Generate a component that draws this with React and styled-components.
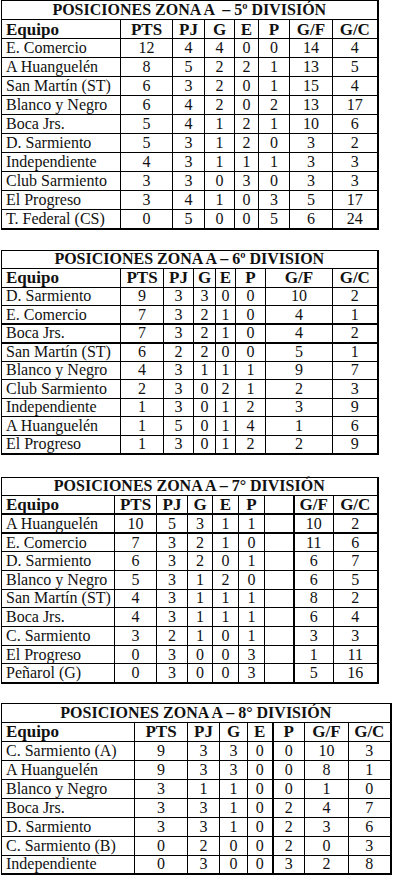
import React from 'react';
import styled, { createGlobalStyle } from 'styled-components';

const GlobalStyle = createGlobalStyle`
    html, body {
        margin: 0;
        padding: 0;
        background: #ffffff;
    }

    body {
        font-family: 'Liberation Serif', 'Times New Roman', serif;
        color: #111111;
    }
`;

// thickCol: index of the column whose right edge is drawn heavier
// thickRows: body rows drawn with a heavier top and bottom line
// blank: index where the sheet has an empty spacer column
const tables = [
    {
        title: 'POSICIONES ZONA A  – 5º DIVISIÓN',
        width: 376,
        rowHeight: 19,
        gap: 0,
        cols: [119, 52, 32, 30, 24, 31, 43, 45],
        thickCol: -1,
        thickRows: [],
        blank: null,
        rows: [
            ['E. Comercio', 12, 4, 4, 0, 0, 14, 4],
            ['A Huanguelén', 8, 5, 2, 2, 1, 13, 5],
            ['San Martín (ST)', 6, 3, 2, 0, 1, 15, 4],
            ['Blanco y Negro', 6, 4, 2, 0, 2, 13, 17],
            ['Boca Jrs.', 5, 4, 1, 2, 1, 10, 6],
            ['D. Sarmiento', 5, 3, 1, 2, 0, 3, 2],
            ['Independiente', 4, 3, 1, 1, 1, 3, 3],
            ['Club Sarmiento', 3, 3, 0, 3, 0, 3, 3],
            ['El Progreso', 3, 4, 1, 0, 3, 5, 17],
            ['T. Federal (CS)', 0, 5, 0, 0, 5, 6, 24],
        ],
    },
    {
        title: 'POSICIONES ZONA A – 6º DIVISION',
        width: 376,
        rowHeight: 18.5,
        gap: 20,
        cols: [119, 43, 30, 22, 20, 30, 67, 45],
        thickCol: -1,
        thickRows: [2],
        blank: null,
        rows: [
            ['D. Sarmiento', 9, 3, 3, 0, 0, 10, 2],
            ['E. Comercio', 7, 3, 2, 1, 0, 4, 1],
            ['Boca Jrs.', 7, 3, 2, 1, 0, 4, 2],
            ['San Martín (ST)', 6, 2, 2, 0, 0, 5, 1],
            ['Blanco y Negro', 4, 3, 1, 1, 1, 9, 7],
            ['Club Sarmiento', 2, 3, 0, 2, 1, 2, 3],
            ['Independiente', 1, 3, 0, 1, 2, 3, 9],
            ['A Huanguelén', 1, 5, 0, 1, 4, 1, 6],
            ['El Progreso', 1, 3, 0, 1, 2, 2, 9],
        ],
    },
    {
        title: 'POSICIONES ZONA A – 7° DIVISIÓN',
        width: 376,
        rowHeight: 18.7,
        gap: 22,
        cols: [113, 42, 31, 25, 26, 26, 29, 40, 44],
        thickCol: 6,
        thickRows: [0],
        blank: 6,
        rows: [
            ['A Huanguelén', 10, 5, 3, 1, 1, 10, 2],
            ['E. Comercio', 7, 3, 2, 1, 0, 11, 6],
            ['D. Sarmiento', 6, 3, 2, 0, 1, 6, 7],
            ['Blanco y Negro', 5, 3, 1, 2, 0, 6, 5],
            ['San Martín (ST)', 4, 3, 1, 1, 1, 8, 2],
            ['Boca Jrs.', 4, 3, 1, 1, 1, 6, 4],
            ['C. Sarmiento', 3, 2, 1, 0, 1, 3, 3],
            ['El Progreso', 0, 3, 0, 0, 3, 1, 11],
            ['Peñarol (G)', 0, 3, 0, 0, 3, 5, 16],
        ],
    },
    {
        title: 'POSICIONES ZONA A – 8° DIVISIÓN',
        width: 389,
        rowHeight: 19,
        gap: 19,
        cols: [133, 53, 32, 28, 25, 32, 44, 42],
        thickCol: 4,
        thickRows: [],
        blank: null,
        rows: [
            ['C. Sarmiento (A)', 9, 3, 3, 0, 0, 10, 3],
            ['A Huanguelén', 9, 3, 3, 0, 0, 8, 1],
            ['Blanco y Negro', 3, 1, 1, 0, 0, 1, 0],
            ['Boca Jrs.', 3, 3, 1, 0, 2, 4, 7],
            ['D. Sarmiento', 3, 3, 1, 0, 2, 3, 6],
            ['C. Sarmiento (B)', 0, 2, 0, 0, 2, 0, 3],
            ['Independiente', 0, 3, 0, 0, 3, 2, 8],
        ],
    },
];

const headings = ['Equipo', 'PTS', 'PJ', 'G', 'E', 'P', 'G/F', 'G/C'];

const withBlank = (list, at) =>
    at == null ? list : [...list.slice(0, at), '', ...list.slice(at)];

const Page = styled.main`
    display: flex;
    flex-direction: column;
    align-items: flex-start;
    padding: 0 0 0 1px;
`;

const Standings = styled.table`
    width: ${(p) => p.$width}px;
    margin-top: ${(p) => p.$gap}px;
    border-collapse: collapse;
    table-layout: fixed;
    border-right: 2px solid #000;
    border-bottom: 2px solid #000;

    tr {
        height: ${(p) => p.$rowHeight}px;
    }
`;

const Row = styled.tr`
    & > td {
        border-top-width: ${(p) => (p.$thick ? '2px' : '1px')};
        border-bottom-width: ${(p) => (p.$thick ? '2px' : '1px')};
    }
`;

const TitleCell = styled.th`
    border: 1px solid #000;
    padding: 0;
    font-size: 16px;
    font-weight: 700;
    text-align: center;
    line-height: 1;
    white-space: pre;
`;

const HeadCell = styled.th`
    border: 1px solid #000;
    border-right-width: ${(p) => (p.$thick ? '2px' : '1px')};
    padding: 0 ${(p) => (p.$left ? '4px' : '0')};
    font-size: 17px;
    font-weight: 700;
    text-align: ${(p) => (p.$left ? 'left' : 'center')};
    line-height: 1;
`;

const NameCell = styled.td`
    border: 1px solid #000;
    padding: 0 0 0 4px;
    font-size: 16px;
    line-height: 1;
    white-space: nowrap;
    overflow: hidden;
`;

const NumCell = styled.td`
    border: 1px solid #000;
    border-right-width: ${(p) => (p.$thick ? '2px' : '1px')};
    padding: 0;
    font-size: 16px;
    line-height: 1;
    text-align: center;
`;

const Table = ({ title, width, rowHeight, gap, cols, thickCol, thickRows, blank, rows }) => (
    <Standings $width={width} $rowHeight={rowHeight} $gap={gap}>
        <colgroup>
            {cols.map((w, i) => (
                <col key={i} style={{ width: w }} />
            ))}
        </colgroup>
        <thead>
            <tr>
                <TitleCell colSpan={cols.length}>{title}</TitleCell>
            </tr>
            <tr>
                {withBlank(headings, blank).map((h, i) => (
                    <HeadCell key={i} $left={i === 0} $thick={i === thickCol}>
                        {h}
                    </HeadCell>
                ))}
            </tr>
        </thead>
        <tbody>
            {rows.map((row, r) => {
                const [name, ...nums] = withBlank(row, blank);
                return (
                    <Row key={name} $thick={thickRows.includes(r)}>
                        <NameCell>{name}</NameCell>
                        {nums.map((n, i) => (
                            <NumCell key={i} $thick={i + 1 === thickCol}>
                                {n}
                            </NumCell>
                        ))}
                    </Row>
                );
            })}
        </tbody>
    </Standings>
);

const App = () => (
    <>
        <GlobalStyle />
        <Page>
            {tables.map((t) => (
                <Table key={t.title} {...t} />
            ))}
        </Page>
    </>
);

export default App;
